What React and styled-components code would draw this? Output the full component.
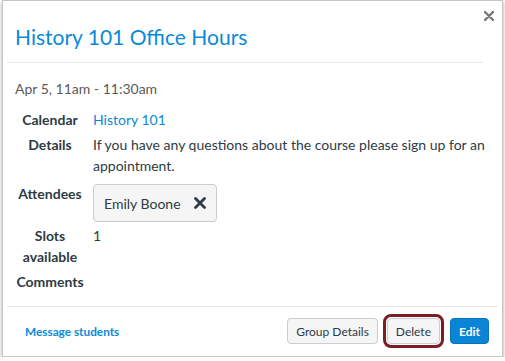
import React from 'react';
import styled, { createGlobalStyle } from 'styled-components';

const GlobalStyle = createGlobalStyle`
  body {
    margin: 0;
    background: #ffffff;
    font-family: Lato, "Open Sans", "Liberation Sans", sans-serif;
    color: #2d3b45;
  }
`;

const StyledCard = styled.div`
  box-sizing: border-box;
  width: 501px;
  margin-left: 2px;
  background: #ffffff;
  border: 1px solid #c6c6c6;
  box-shadow: 0px 2px 4px rgba(0, 0, 0, 0.35);
`;

const StyledCloseRow = styled.div`
  display: flex;
  justify-content: flex-end;
  padding: 10px 8px 2px 0;
`;

const StyledCloseBtn = styled.button`
  width: 10px;
  height: 10px;
  padding: 0;
  border: none;
  background: none;
  display: flex;
  cursor: pointer;
`;

const StyledTitle = styled.h2`
  margin: 0;
  padding-left: 12px;
  font-size: 21px;
  line-height: 28px;
  font-weight: 400;
  color: #0a8ad8;
`;

const StyledDivider = styled.div`
  height: 1px;
  background-color: #e6e6e6;
  margin: ${({ inset }) => inset};
`;

const StyledBody = styled.div`
  padding: 15px 12px 14px 12px;
`;

const StyledDate = styled.div`
  font-size: 14px;
  line-height: 21px;
  color: #5a5a5a;
  margin-bottom: 10px;
`;

const StyledTable = styled.div`
  display: grid;
  grid-template-columns: 70px 1fr;
  column-gap: 8px;
  row-gap: 4px;
  font-size: 14px;
  line-height: 21px;
`;

const StyledLabel = styled.div`
  font-weight: 700;
  text-align: center;
  color: #2d3b45;
  margin-top: ${({ shift }) => shift || 0}px;
`;

const StyledValue = styled.div`
  color: #2d3b45;
  margin-top: ${({ shift }) => shift || 0}px;
`;

const StyledLink = styled.a`
  color: #0a8ad8;
  text-decoration: none;
`;

const StyledChip = styled.div`
  display: inline-flex;
  align-items: center;
  gap: 13px;
  height: 38px;
  box-sizing: border-box;
  padding: 0 10px;
  background: #f5f5f5;
  border: 1px solid #c7cdd1;
  border-radius: 4px;
  margin-bottom: -1px;
`;

const StyledFooter = styled.div`
  display: flex;
  align-items: center;
  padding: 11px 13px 12px 22px;
`;

const StyledFooterLink = styled.a`
  font-size: 11.8px;
  font-weight: 700;
  color: #0a8ad8;
  text-decoration: none;
  margin-right: auto;
`;

const StyledButtons = styled.div`
  display: flex;
  align-items: center;
  gap: 9px;
`;

const StyledBtn = styled.button`
  height: 26px;
  box-sizing: border-box;
  padding: 0 8px;
  font-family: Lato, "Open Sans", "Liberation Sans", sans-serif;
  font-size: 12px;
  border-radius: 4px;
  cursor: pointer;
  background: ${({ primary }) => (primary ? '#0a84d4' : '#f5f5f5')};
  color: ${({ primary }) => (primary ? '#ffffff' : '#2d3b45')};
  font-weight: ${({ primary }) => (primary ? 700 : 400)};
  border: 1px solid ${({ primary }) => (primary ? '#0a74bb' : '#c7cdd1')};
  outline: ${({ focused }) => (focused ? '3px solid #7c1d22' : 'none')};
  outline-offset: 1px;
  margin: ${({ focused }) => (focused ? '0 1px 0 0' : '0')};
`;

const CloseIcon = () => (
  <svg width="10" height="10" viewBox="0 0 10 10">
    <path d="M1 1 L9 9 M9 1 L1 9" stroke="#777" strokeWidth="2.4" strokeLinecap="round" />
  </svg>
);

const RemoveIcon = () => (
  <svg width="12" height="12" viewBox="0 0 12 12">
    <path d="M1.5 1.5 L10.5 10.5 M10.5 1.5 L1.5 10.5" stroke="#2d3b45" strokeWidth="2.8" strokeLinecap="round" />
  </svg>
);

export default function App() {
  return (
    <>
      <GlobalStyle />
      <StyledCard>
        <StyledCloseRow>
          <StyledCloseBtn aria-label="Close"><CloseIcon /></StyledCloseBtn>
        </StyledCloseRow>
        <StyledTitle>History 101 Office Hours</StyledTitle>
        <StyledDivider inset="11px 19px 0 4px" />

        <StyledBody>
          <StyledDate>Apr 5, 11am - 11:30am</StyledDate>
          <StyledTable>
            <StyledLabel>Calendar</StyledLabel>
            <StyledValue><StyledLink href="#">History 101</StyledLink></StyledValue>

            <StyledLabel>Details</StyledLabel>
            <StyledValue>If you have any questions about the course please sign up for an appointment.</StyledValue>

            <StyledLabel shift={3}>Attendees</StyledLabel>
            <StyledValue shift={4}>
              <StyledChip>
                Emily Boone
                <RemoveIcon />
              </StyledChip>
            </StyledValue>

            <StyledLabel>Slots available</StyledLabel>
            <StyledValue>1</StyledValue>

            <StyledLabel>Comments</StyledLabel>
            <StyledValue />
          </StyledTable>
        </StyledBody>

        <StyledDivider inset="0 4px" />
        <StyledFooter>
          <StyledFooterLink href="#">Message students</StyledFooterLink>
          <StyledButtons>
            <StyledBtn>Group Details</StyledBtn>
            <StyledBtn focused>Delete</StyledBtn>
            <StyledBtn primary>Edit</StyledBtn>
          </StyledButtons>
        </StyledFooter>
      </StyledCard>
    </>
  );
}
